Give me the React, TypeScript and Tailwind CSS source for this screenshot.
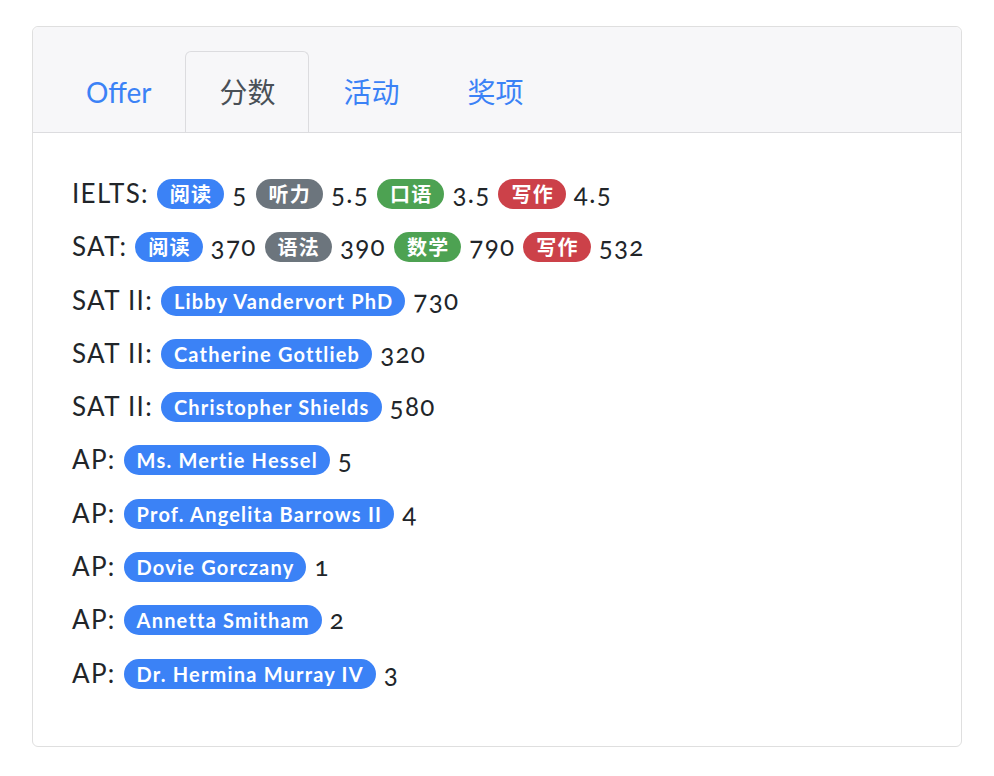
import React from 'react'

type Tone = 'blue' | 'gray' | 'green' | 'red'

const toneClass: Record<Tone, string> = {
  blue: 'bg-[#3b82f6]',
  gray: 'bg-[#6c757d]',
  green: 'bg-[#4da252]',
  red: 'bg-[#cc4149]',
}

function Badge({ tone = 'blue', children }: { tone?: Tone; children: React.ReactNode }) {
  return (
    <span
      className={`${toneClass[tone]} inline-block rounded-full py-[5px] pl-[13px] pr-[12px] text-[20px] font-bold leading-[20px] tracking-[1.2px] text-white align-[1px]`}
    >
      {children}
    </span>
  )
}

type Part = [string, string, Tone?]

const rows: { label: string; parts: Part[] }[] = [
  {
    label: 'IELTS:',
    parts: [
      ['阅读', '5', 'blue'],
      ['听力', '5.5', 'gray'],
      ['口语', '3.5', 'green'],
      ['写作', '4.5', 'red'],
    ],
  },
  {
    label: 'SAT:',
    parts: [
      ['阅读', '370', 'blue'],
      ['语法', '390', 'gray'],
      ['数学', '790', 'green'],
      ['写作', '532', 'red'],
    ],
  },
  { label: 'SAT II:', parts: [['Libby Vandervort PhD', '730']] },
  { label: 'SAT II:', parts: [['Catherine Gottlieb', '320']] },
  { label: 'SAT II:', parts: [['Christopher Shields', '580']] },
  { label: 'AP:', parts: [['Ms. Mertie Hessel', '5']] },
  { label: 'AP:', parts: [['Prof. Angelita Barrows II', '4']] },
  { label: 'AP:', parts: [['Dovie Gorczany', '1']] },
  { label: 'AP:', parts: [['Annetta Smitham', '2']] },
  { label: 'AP:', parts: [['Dr. Hermina Murray IV', '3']] },
]

const tabs = ['Offer', '分数', '活动', '奖项']

export default function App() {
  return (
    <div
      className="min-h-[776px] bg-white px-[32px] pt-[26px]"
      style={{ fontFamily: 'Lato, "Noto Sans CJK SC", sans-serif' }}
    >
      <div className="w-[930px] rounded-[6px] border border-[#dfdfdf] bg-white">
        {/* Header tabs */}
        <div className="flex rounded-t-[6px] border-b border-[#dcdcdf] bg-[#f7f7f9] pl-[19px] pt-[24px]">
          {tabs.map((t, i) =>
            i === 1 ? (
              <div
                key={t}
                className="-mb-px flex h-[81px] items-center rounded-t-[6px] border border-b-0 border-[#dcdcdf] bg-[#f7f7f9] px-[33px] text-[28px] text-[#495057]"
              >
                {t}
              </div>
            ) : (
              <div
                key={t}
                className="flex h-[81px] items-center border border-transparent px-[33px] text-[28px] text-[#3b82f6]"
              >
                {t}
              </div>
            ),
          )}
        </div>

        {/* Scores */}
        <div className="flex flex-col px-[39px] pb-[46px] pt-[34px] text-[26px] tracking-[1.3px] text-[#212529] oldstyle-nums">
          {rows.map((r, i) => (
            <div key={i} className="h-[53.3px] whitespace-nowrap leading-[53px]">
              {r.label}{' '}
              {r.parts.map(([name, score, tone], j) => (
                <React.Fragment key={j}>
                  <Badge tone={tone ?? 'blue'}>{name}</Badge> {score}{' '}
                </React.Fragment>
              ))}
            </div>
          ))}
        </div>
      </div>
    </div>
  )
}
